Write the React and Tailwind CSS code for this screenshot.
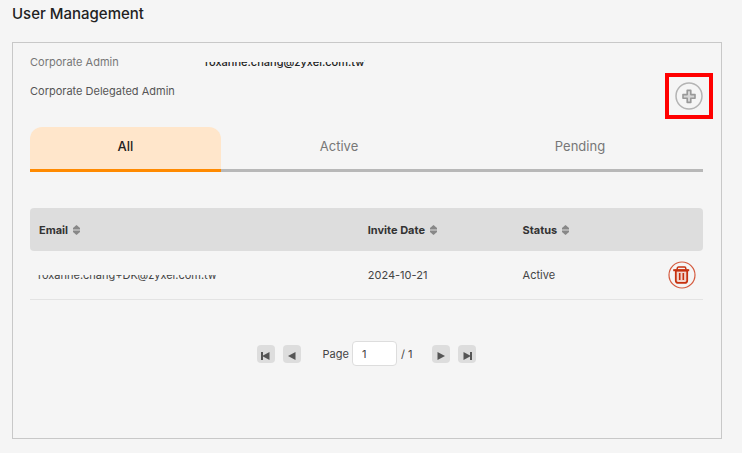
import { useState } from 'react'

const tabs = ['All', 'Active', 'Pending']

const users = [
  { email: 'roxanne.chang+DK@zyxel.com.tw', invited: '2024-10-21', status: 'Active' }
]

function SortIcon() {
  return (
    <svg width="7" height="10" viewBox="0 0 7 10" fill="#888888" aria-hidden="true">
      <path d="M3.5 0 7 3V4.5H0V3Z" />
      <path d="M3.5 10 7 7V5.5H0V7Z" />
    </svg>
  )
}

function SortHeader({ children }) {
  return (
    <button type="button" className="flex items-center gap-[5px] font-bold">
      {children}
      <SortIcon />
    </button>
  )
}

function PlusCircle() {
  return (
    <svg width="28" height="28" viewBox="0 0 28 28" fill="none" aria-hidden="true">
      <circle cx="14" cy="14" r="13" stroke="#b4b4b4" strokeWidth="1.5" />
      <path
        d="M12.200 8.400h3.600v4.200H20v3.600h-4.200v4.200h-3.600v-4.200H8v-3.600h4.200Z"
        fill="#d6d6d6"
        stroke="#999999"
        strokeWidth="1.6"
        strokeLinejoin="round"
      />
    </svg>
  )
}

function TrashCircle() {
  return (
    <svg width="28" height="28" viewBox="0 0 28 28" fill="none" stroke="#c6310f" aria-hidden="true">
      <circle cx="14" cy="14" r="13" strokeWidth="1.2" stroke="#d4593d" />
      <path d="M7.800 9.500h11.400v10.200a2.200 2.200 0 0 1-2.200 2.200h-7a2.200 2.200 0 0 1-2.200-2.200Z" fill="#f2d5cd" strokeWidth="1.8" />
      <path d="M5.200 9.200h16" strokeWidth="2" />
      <path d="M9.200 8.500V7.400a1.300 1.300 0 0 1 1.300-1.300h6a1.300 1.300 0 0 1 1.300 1.300v1.100" strokeWidth="1.500" />
      <path d="M11.700 12v7M15.300 12v7" strokeWidth="1.600" />
    </svg>
  )
}

function PageButton({ label, path }) {
  return (
    <button type="button" aria-label={label} className="flex size-[18px] items-center justify-center rounded bg-[#dddddd]">
      <svg width="10" height="8" viewBox="0 0 10 8" fill="#555555" className="mt-1" aria-hidden="true">
        <path d={path} />
      </svg>
    </button>
  )
}

export default function App() {
  const [tab, setTab] = useState('All')
  const [page, setPage] = useState('1')

  return (
    <main className="min-h-screen bg-[#f5f5f5] px-3 pt-1 pb-3 font-['Inter',sans-serif] text-[11px] leading-4 text-[#444444]">
      <h1 className="text-[15px] leading-5 font-medium text-[#222222]">User Management</h1>

      <section className="mt-[18px] mr-2 border border-[#c8c8c8] pt-[11px] pr-[18px] pb-[72px] pl-[17px]">
        <div className="flex items-start justify-between">
          <dl>
            <div className="flex">
              <dt className="w-[175px] text-[#777777]">Corporate Admin</dt>
              <dd className="relative font-medium text-[#222222]">
                roxanne.chang@zyxel.com.tw
                <span className="absolute inset-x-0 top-0 h-2 bg-[#f5f5f5]" />
              </dd>
            </div>
            <div className="mt-[13px] flex">
              <dt className="text-[#555555]">Corporate Delegated Admin</dt>
            </div>
          </dl>
          <button type="button" aria-label="Add delegated admin" className="relative mt-7">
            <PlusCircle />
            <span className="absolute -inset-x-[10px] -inset-y-[9px] border-4 border-[#ff0000]" />
          </button>
        </div>

        <div role="tablist" className="mt-[17px] grid grid-cols-[191fr_236fr_246fr] text-[13px]">
          {tabs.map((name) => (
            <button
              key={name}
              type="button"
              role="tab"
              aria-selected={tab === name}
              onClick={() => setTab(name)}
              className={`h-[45px] border-b-3 pb-1 ${
                tab === name
                  ? 'rounded-t-xl border-[#ff8a00] bg-[#ffe6cb] font-medium text-[#222222]'
                  : 'border-[#b8b8b8] text-[#777777]'
              }`}
            >
              {name}
            </button>
          ))}
        </div>

        <table className="mt-9 w-full table-fixed border-separate border-spacing-0 text-left">
          <thead>
            <tr className="h-[43px] text-[#333333]">
              <th className="w-[49%] rounded-l bg-[#dddddd] px-[9px]"><SortHeader>Email</SortHeader></th>
              <th className="w-[23%] bg-[#dddddd] px-2"><SortHeader>Invite Date</SortHeader></th>
              <th className="w-[18%] bg-[#dddddd] px-2"><SortHeader>Status</SortHeader></th>
              <th className="w-[10%] rounded-r bg-[#dddddd]"></th>
            </tr>
          </thead>
          <tbody>
            {users.map((user) => (
              <tr key={user.email} className="h-[49px]">
                <td className="border-b border-[#e3e3e3] px-2">
                  <span className="relative inline-block">
                    {user.email}
                    <span className="absolute inset-x-0 top-0 h-2 bg-[#f5f5f5]" />
                    <span className="absolute inset-x-0 bottom-0 h-[2px] bg-[#f5f5f5]" />
                  </span>
                </td>
                <td className="border-b border-[#e3e3e3] px-2">{user.invited}</td>
                <td className="border-b border-[#e3e3e3] px-2">{user.status}</td>
                <td className="border-b border-[#e3e3e3] pr-[7px]">
                  <button type="button" aria-label={`Delete ${user.email}`} className="ml-auto block">
                    <TrashCircle />
                  </button>
                </td>
              </tr>
            ))}
          </tbody>
        </table>

        <nav aria-label="Pagination" className="mt-[41px] flex items-center justify-center">
          <div className="flex gap-2">
            <PageButton label="First page" path="M0 0h2v3.400L8.500 0v8L2 4.600V8H0Z" />
            <PageButton label="Previous page" path="M1 4 8.500 0v8Z" />
          </div>
          <label className="ml-[22px] flex items-center gap-[3px]">
            Page
            <input
              value={page}
              onChange={(e) => setPage(e.target.value)}
              className="h-[25px] w-[45px] rounded border border-[#dddddd] bg-white px-[9px]"
            />
          </label>
          <span className="ml-1">/ 1</span>
          <div className="ml-5 flex gap-2">
            <PageButton label="Next page" path="M9 4 1.500 0v8Z" />
            <PageButton label="Last page" path="M10 0H8v3.400L1.500 0v8L8 4.600V8h2Z" />
          </div>
        </nav>
      </section>
    </main>
  )
}
